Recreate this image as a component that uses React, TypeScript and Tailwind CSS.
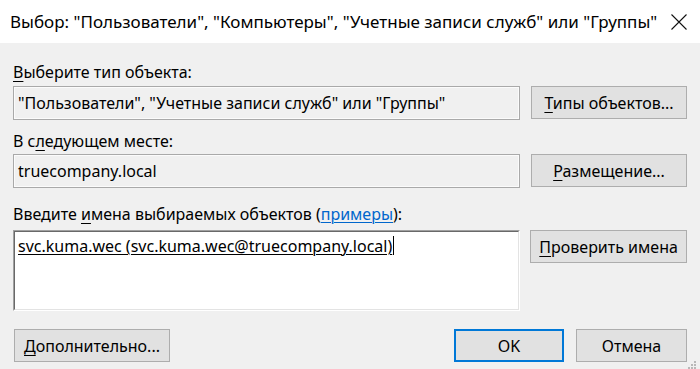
import React from 'react';

const font = { fontFamily: '"Noto Sans", "Open Sans", sans-serif' };

function Btn({ children, className = '' }: { children: React.ReactNode; className?: string }) {
  return (
    <div
      className={
        'flex h-[33px] items-center justify-center border border-[#adadad] bg-[#e1e1e1] text-[16px] text-black ' +
        className
      }
    >
      {children}
    </div>
  );
}

function ReadBox({ children }: { children: React.ReactNode }) {
  return (
    <div className="flex h-[34px] w-[507px] items-center border border-[#a9a9a9] bg-[#f0f0f0] pl-[4px] text-[16px] text-black shadow-[inset_0_0_0_1px_#fbfbfb]">
      {children}
    </div>
  );
}

export default function App() {
  return (
    <div className="flex h-[369px] w-[700px] flex-col overflow-hidden bg-[#f0f0f0] text-black" style={font}>
      {/* Title bar */}
      <div className="flex h-[43px] shrink-0 items-center justify-between bg-white pl-[10px] pr-[13px]">
        <span className="text-[17px] leading-none">
          Выбор: "Пользователи", "Компьютеры", "Учетные записи служб" или "Группы"
        </span>
        <svg width="16" height="16" viewBox="0 0 16 16" className="mt-[1px]">
          <path d="M0.5 0.5 L15.5 15.5 M15.5 0.5 L0.5 15.5" stroke="#111" strokeWidth="1.1" />
        </svg>
      </div>

      <div className="flex flex-1 flex-col px-[13px]">
        <div className="mt-[17px] h-[24px] text-[16px] leading-[24px]">
          <u className="decoration-1 underline-offset-3">В</u>ыберите тип объекта:
        </div>
        <div className="mt-[2px] flex gap-[11px]">
          <ReadBox>"Пользователи", "Учетные записи служб" или "Группы"</ReadBox>
          <Btn className="w-[156px]">
            <span>
              <u className="decoration-1 underline-offset-3">Т</u>ипы объектов...
            </span>
          </Btn>
        </div>

        <div className="mt-[9px] h-[24px] text-[16px] leading-[24px]">
          В с<u className="decoration-1 underline-offset-3">л</u>едующем месте:
        </div>
        <div className="mt-[1px] flex gap-[11px]">
          <ReadBox>truecompany.local</ReadBox>
          <Btn className="w-[156px]">
            <span>
              <u className="decoration-1 underline-offset-3">Р</u>азмещение...
            </span>
          </Btn>
        </div>

        <div className="mt-[14px] h-[24px] text-[16px] leading-[24px]">
          Введите <u className="decoration-1 underline-offset-3">и</u>мена выбираемых объектов (
          <span className="text-[#0066cc] underline decoration-1 underline-offset-2">примеры</span>):
        </div>
        <div className="mt-[4px] flex items-start gap-[10px]">
          <div className="h-[81px] w-[508px] border border-b-white border-l-[#a0a0a0] border-r-white border-t-[#a0a0a0]">
            <div className="h-full border border-b-[#e3e3e3] border-l-[#696969] border-r-[#e3e3e3] border-t-[#696969] bg-white pl-[3px] pt-[1px] text-[16px] leading-[20px]">
              <span className="underline decoration-1 underline-offset-2">
                svc.kuma.wec (svc.kuma.wec@truecompany.local)
              </span>
              <span className="ml-[1px] inline-block h-[19px] w-[1px] translate-y-[3px] bg-black" />
            </div>
          </div>
          <Btn className="w-[157px]">
            <span>
              <u className="decoration-1 underline-offset-3">П</u>роверить имена
            </span>
          </Btn>
        </div>

        <div className="mt-[18px] flex items-center">
          <Btn className="ml-[1px] w-[156px]">
            <span>
              <u className="decoration-1 underline-offset-3">Д</u>ополнительно...
            </span>
          </Btn>
          <div className="ml-auto flex gap-[12px]">
            <div className="flex h-[33px] w-[110px] items-center justify-center border-2 border-[#0078d7] bg-[#e1e1e1] text-[16px]">
              OK
            </div>
            <Btn className="w-[111px]">Отмена</Btn>
          </div>
        </div>
        <div className="flex justify-end">
          <svg width="8" height="8" viewBox="0 0 8 8" className="-mr-[9px] -mt-[1px]">
            <rect x="6" y="0" width="2" height="2" fill="#b8b8b8" />
            <rect x="3" y="3" width="2" height="2" fill="#b8b8b8" />
            <rect x="6" y="3" width="2" height="2" fill="#b8b8b8" />
            <rect x="0" y="6" width="2" height="2" fill="#b8b8b8" />
            <rect x="3" y="6" width="2" height="2" fill="#b8b8b8" />
            <rect x="6" y="6" width="2" height="2" fill="#b8b8b8" />
          </svg>
        </div>
      </div>
    </div>
  );
}
